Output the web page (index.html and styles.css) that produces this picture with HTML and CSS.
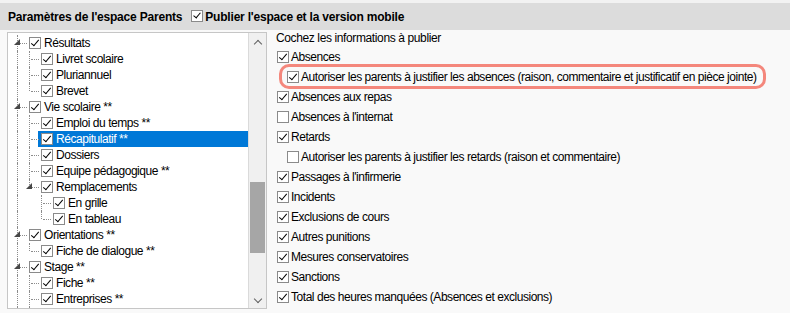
FILE: index.html
```html
<!DOCTYPE html>
<html lang="fr">
<head>
<meta charset="utf-8">
<title>Paramètres de l'espace Parents</title>
<link rel="stylesheet" href="styles.css">
</head>
<body>
<div class="header">
  <span class="htitle">Paramètres de l'espace Parents</span>
  <span class="cb hcb on"></span>
  <span class="htitle">Publier l'espace et la version mobile</span>
</div>
<div class="main">
  <div class="tree">
    <div class="tree-body">
      <div class="tr"><span class="g c"><i class="tri"></i></span><span class="cb on"></span><span class="tl">Résultats</span></div>
      <div class="tr"><span class="g v"></span><span class="g c"></span><span class="cb on"></span><span class="tl">Livret scolaire</span></div>
      <div class="tr"><span class="g v"></span><span class="g c"></span><span class="cb on"></span><span class="tl">Pluriannuel</span></div>
      <div class="tr"><span class="g v"></span><span class="g c last"></span><span class="cb on"></span><span class="tl">Brevet</span></div>
      <div class="tr"><span class="g c"><i class="tri"></i></span><span class="cb on"></span><span class="tl">Vie scolaire **</span></div>
      <div class="tr"><span class="g v"></span><span class="g c"></span><span class="cb on"></span><span class="tl">Emploi du temps **</span></div>
      <div class="tr"><span class="g v"></span><span class="g c"></span><span class="sel"><span class="cb on"></span><span class="tl">Récapitulatif **</span></span></div>
      <div class="tr"><span class="g v"></span><span class="g c"></span><span class="cb on"></span><span class="tl">Dossiers</span></div>
      <div class="tr"><span class="g v"></span><span class="g c"></span><span class="cb on"></span><span class="tl">Equipe pédagogique **</span></div>
      <div class="tr"><span class="g v"></span><span class="g c last"><i class="tri"></i></span><span class="cb on"></span><span class="tl">Remplacements</span></div>
      <div class="tr"><span class="g v"></span><span class="g"></span><span class="g c"></span><span class="cb on"></span><span class="tl">En grille</span></div>
      <div class="tr"><span class="g v"></span><span class="g"></span><span class="g c last"></span><span class="cb on"></span><span class="tl">En tableau</span></div>
      <div class="tr"><span class="g c"><i class="tri"></i></span><span class="cb on"></span><span class="tl">Orientations **</span></div>
      <div class="tr"><span class="g v"></span><span class="g c last"></span><span class="cb on"></span><span class="tl">Fiche de dialogue **</span></div>
      <div class="tr"><span class="g c"><i class="tri"></i></span><span class="cb on"></span><span class="tl">Stage **</span></div>
      <div class="tr"><span class="g v"></span><span class="g c"></span><span class="cb on"></span><span class="tl">Fiche **</span></div>
      <div class="tr"><span class="g v"></span><span class="g c"></span><span class="cb on"></span><span class="tl">Entreprises **</span></div>
      <div class="tr"><span class="g v"></span><span class="g v"></span></div>
    </div>
    <div class="sb">
      <div class="sb-btn"><span class="chev up"></span></div>
      <div class="sb-track"><div class="sb-thumb"></div></div>
      <div class="sb-btn"><span class="chev down"></span></div>
    </div>
  </div>
  <div class="opts">
    <div class="otitle">Cochez les informations à publier</div>
    <div class="or"><span class="cb on"></span><span class="ol">Absences</span></div>
    <div class="or sub hl"><span class="cb on"></span><span class="ol">Autoriser les parents à justifier les absences (raison, commentaire et justificatif en pièce jointe)</span></div>
    <div class="or"><span class="cb on"></span><span class="ol">Absences aux repas</span></div>
    <div class="or"><span class="cb"></span><span class="ol">Absences à l'internat</span></div>
    <div class="or"><span class="cb on"></span><span class="ol">Retards</span></div>
    <div class="or sub"><span class="cb"></span><span class="ol">Autoriser les parents à justifier les retards (raison et commentaire)</span></div>
    <div class="or"><span class="cb on"></span><span class="ol">Passages à l'infirmerie</span></div>
    <div class="or"><span class="cb on"></span><span class="ol">Incidents</span></div>
    <div class="or"><span class="cb on"></span><span class="ol">Exclusions de cours</span></div>
    <div class="or"><span class="cb on"></span><span class="ol">Autres punitions</span></div>
    <div class="or"><span class="cb on"></span><span class="ol">Mesures conservatoires</span></div>
    <div class="or"><span class="cb on"></span><span class="ol">Sanctions</span></div>
    <div class="or"><span class="cb on"></span><span class="ol">Total des heures manquées (Absences et exclusions)</span></div>
  </div>
</div>
</body>
</html>
```

FILE: styles.css
```css
* { box-sizing: border-box; }
html, body { margin: 0; padding: 0; }
body {
  width: 790px;
  height: 313px;
  overflow: hidden;
  background: #f9f9f9;
  font-family: "Liberation Sans", Arial, sans-serif;
  font-size: 12px;
  color: #000;
}

/* header */
.header {
  height: 30px;
  border-top: 3px solid #f2f2f2;
  background: #dcdcdc;
  display: flex;
  align-items: center;
  padding-left: 8px;
}
.htitle {
  font-weight: bold;
  font-size: 12px;
  letter-spacing: -0.2px;
}
.hcb {
  margin: 0 2px 2px 9px;
  width: 11px;
  height: 11px;
}

/* checkbox */
.cb {
  position: relative;
  flex: none;
  display: inline-block;
  width: 12px;
  height: 12px;
  border: 1px solid #8a8a8a;
  background: #fff;
}
.cb.on::after {
  content: "";
  position: absolute;
  left: 3px;
  top: 0px;
  width: 3px;
  height: 7px;
  border-right: 1.7px solid #000;
  border-bottom: 1.7px solid #000;
  transform: rotate(40deg);
}
.hcb.on::after { left: 3px; top: 0px; height: 6px; }

/* main */
.main {
  display: flex;
  align-items: flex-start;
}

/* tree */
.tree {
  margin: 2px 0 0 7px;
  width: 260px;
  height: 277px;
  border: 1px solid #c6c6c6;
  background: #fff;
  display: flex;
  overflow: hidden;
}
.tree-body {
  flex: 1;
  padding-top: 2px;
  overflow: hidden;
}
.tr {
  height: 16px;
  display: flex;
  align-items: center;
  padding-left: 9px;
}
.g {
  position: relative;
  flex: none;
  width: 12px;
  height: 16px;
  align-self: stretch;
}
.g.v::before,
.g.c::before {
  content: "";
  position: absolute;
  left: 0;
  top: 0;
  bottom: 0;
  border-left: 1px dotted #8c8c8c;
}
.g.c.last::before { bottom: 8px; }
.g.c::after {
  content: "";
  position: absolute;
  left: 2px;
  right: 2px;
  top: 8px;
  border-top: 1px dotted #8c8c8c;
}
.tri {
  position: absolute;
  z-index: 1;
  left: -3px;
  top: 4px;
  width: 0;
  height: 0;
  border-left: 6px solid transparent;
  border-bottom: 6px solid #474747;
}
.tl {
  margin-left: 3px;
  letter-spacing: -0.45px;
  white-space: nowrap;
}
.sel {
  flex: 1;
  display: flex;
  align-items: center;
  align-self: stretch;
  margin-left: -3px;
  padding-left: 3px;
  background: #0078d7;
  color: #fff;
}

/* scrollbar */
.sb {
  flex: none;
  width: 18px;
  display: flex;
  flex-direction: column;
  background: #f0f0f0;
  border-left: 1px solid #dadada;
}
.sb-btn {
  height: 17px;
  display: flex;
  align-items: center;
  justify-content: center;
}
.chev {
  width: 6px;
  height: 6px;
  border-left: 1.5px solid #606060;
  border-top: 1.5px solid #606060;
}
.chev.up { transform: translateY(2px) rotate(45deg); }
.chev.down { transform: translateY(-1px) rotate(225deg); }
.sb-track {
  flex: 1;
  padding: 132px 1px 0 1px;
}
.sb-thumb {
  height: 71px;
  background: #a6a6a6;
}

/* options */
.opts {
  margin-left: 9px;
  display: flex;
  flex-direction: column;
  align-items: flex-start;
}
.otitle {
  height: 17px;
  line-height: 17px;
  letter-spacing: -0.38px;
  white-space: nowrap;
}
.or {
  height: 20px;
  display: flex;
  align-items: center;
  padding-left: 1px;
}
.or.sub { padding-left: 11px; }
.ol {
  margin-left: 2px;
  letter-spacing: -0.46px;
  white-space: nowrap;
}
.or.hl {
  height: 25px;
  margin: -3px 0 -2px 3px;
  border: 3px solid #f4877c;
  border-radius: 10px;
  padding: 0 6px 0 5px;
}
```
